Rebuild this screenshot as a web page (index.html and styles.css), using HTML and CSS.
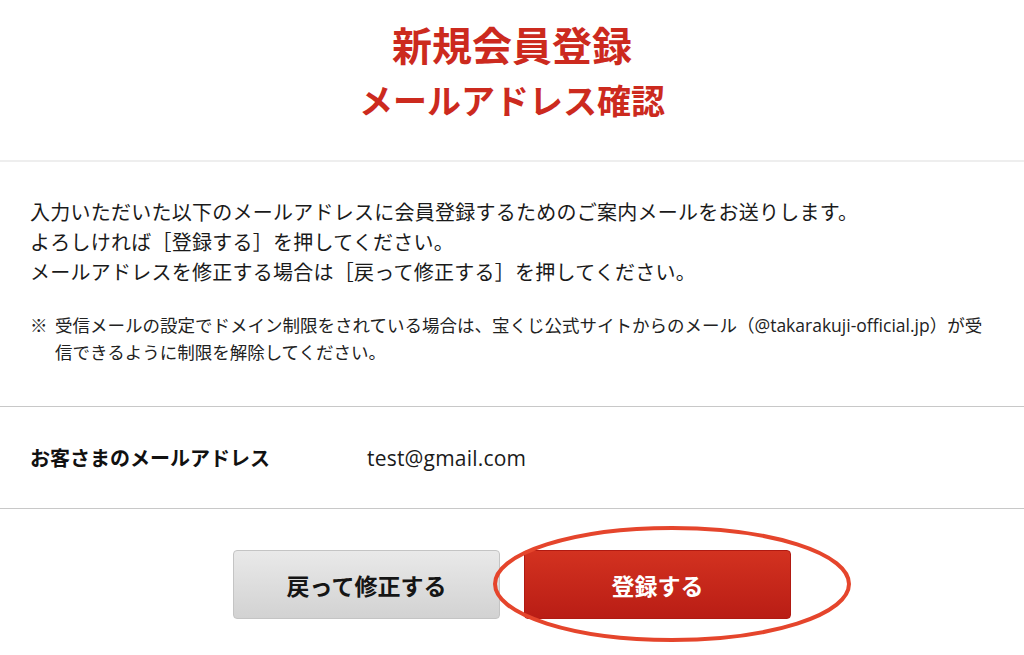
FILE: index.html
```html
<!DOCTYPE html>
<html lang="ja">
<head>
<meta charset="utf-8">
<title>新規会員登録 メールアドレス確認</title>
<link rel="stylesheet" href="styles.css">
</head>
<body>
<header class="page-head">
  <h1 class="title">
    <span class="title-main">新規会員登録</span>
    <span class="title-sub">メールアドレス確認</span>
  </h1>
</header>
<main class="content">
  <section class="intro">
    <p class="lead">入力いただいた以下のメールアドレスに会員登録するためのご案内メールをお送りします。<br>よろしければ［登録する］を押してください。<br>メールアドレスを修正する場合は［戻って修正する］を押してください。</p>
    <p class="note"><span class="note-mark">※</span><span class="note-text">受信メールの設定でドメイン制限をされている場合は、宝くじ公式サイトからのメール（@takarakuji-official.jp）が受<br>信できるように制限を解除してください。</span></p>
  </section>
  <dl class="info-row">
    <dt class="info-label">お客さまのメールアドレス</dt>
    <dd class="info-value">test@gmail.com</dd>
  </dl>
  <div class="actions">
    <button class="btn btn-back" type="button">戻って修正する</button>
    <button class="btn btn-submit" type="button">登録する</button>
    <svg class="highlight" width="364" height="122" viewBox="0 0 364 122" aria-hidden="true">
      <ellipse cx="182" cy="61" rx="177" ry="56" fill="none" stroke="#e5452c" stroke-width="4"/>
    </svg>
  </div>
</main>
</body>
</html>
```

FILE: styles.css
```css
* {
  box-sizing: border-box;
}

html, body {
  margin: 0;
  padding: 0;
  background: #ffffff;
}

body {
  font-family: "Open Sans", "Noto Sans CJK JP", sans-serif;
  color: #1a1a1a;
  width: 1024px;
  height: 655px;
  overflow: hidden;
}

.page-head {
  padding: 16px 0 32px;
  border-bottom: 2px solid #eeeeee;
}

.title {
  margin: 0;
  display: flex;
  flex-direction: column;
  align-items: center;
  font-family: "Noto Sans CJK JP", sans-serif;
  font-weight: 700;
  color: #cc2a1e;
}

.title-main {
  font-size: 40px;
  line-height: 56px;
}

.title-sub {
  font-size: 34px;
  line-height: 56px;
}

.intro {
  padding: 36px 24px 40px 30px;
  border-bottom: 1px solid #c8c8c8;
}

.lead {
  margin: 0;
  font-size: 20px;
  line-height: 30px;
  letter-spacing: 0.25px;
  color: #1a1a1a;
}

.note {
  margin: 24px 0 0;
  display: flex;
  font-size: 17.5px;
  line-height: 27px;
  color: #222222;
}

.note-mark {
  flex: 0 0 25px;
}

.note-text {
  flex: 1 1 auto;
}

.info-row {
  margin: 0;
  height: 102px;
  display: flex;
  align-items: center;
  padding: 0 30px;
  border-bottom: 1px solid #c8c8c8;
}

.info-label {
  flex: 0 0 337px;
  font-size: 20px;
  font-weight: 700;
  color: #111111;
}

.info-value {
  margin: 0;
  font-size: 21px;
  letter-spacing: 0.2px;
  color: #1a1a1a;
}

.actions {
  position: relative;
  margin-top: 41px;
  display: flex;
  justify-content: center;
  gap: 24px;
}

.btn {
  width: 267px;
  height: 69px;
  border-radius: 4px;
  font-family: "Noto Sans CJK JP", sans-serif;
  font-size: 23px;
  font-weight: 700;
  cursor: pointer;
}

.btn-back {
  border: 1px solid #c4c4c4;
  background: linear-gradient(#e9e9e9, #d2d2d2);
  color: #151515;
}

.btn-submit {
  border: 1px solid #b01a12;
  background: linear-gradient(#d33220, #b91d15);
  color: #ffffff;
}

.highlight {
  position: absolute;
  left: 490px;
  top: -27px;
  pointer-events: none;
}
```
